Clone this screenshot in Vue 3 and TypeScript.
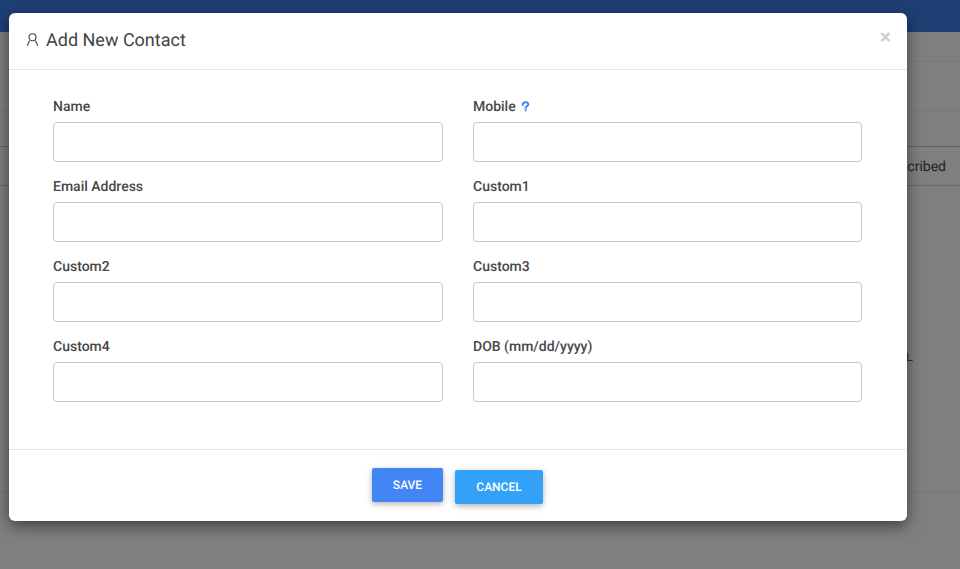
<script setup lang="ts">
const fields: { label: string; help?: boolean }[] = [
  { label: 'Name' },
  { label: 'Mobile', help: true },
  { label: 'Email Address' },
  { label: 'Custom1' },
  { label: 'Custom2' },
  { label: 'Custom3' },
  { label: 'Custom4' },
  { label: 'DOB (mm/dd/yyyy)' },
]
</script>

<template>
  <div class="page">
    <header class="topbar"></header>
    <div class="band band-a"></div>
    <div class="band band-b"></div>
    <div class="band band-c"></div>
    <div class="table-head"><span>Subscribed</span></div>
    <div class="table-body"><span class="stray">L.</span></div>
    <div class="page-foot"></div>

    <div class="overlay">
      <div class="modal">
        <div class="modal-head">
          <svg class="user" viewBox="0 0 13 14" width="13" height="14" fill="none" stroke="#444" stroke-width="1.1">
            <circle cx="6.5" cy="4.2" r="3.5" />
            <path d="M3.6 7.6 1.2 12.8M9.4 7.6l2.4 5.2" />
          </svg>
          <h4 class="title">Add New Contact</h4>
          <span class="close">×</span>
        </div>
        <div class="modal-body">
          <div v-for="f in fields" :key="f.label" class="field">
            <label class="label">
              {{ f.label }}
              <svg v-if="f.help" class="help" viewBox="0 0 10 12" width="9" height="11" fill="none" stroke-linecap="round">
                <path d="M2 4.2C2 2.5 3.3 1.3 5 1.3s3 1.2 3 2.8c0 1.6-2.9 2-2.9 3.2v3.2" stroke="#3f83f8" stroke-width="2.3" />
                <path d="M3.4 4C3.6 3 4.1 2.6 5 2.6s1.6.6 1.6 1.5M5.1 7.6v2.4" stroke="#d5e4ff" stroke-width="0.8" />
              </svg>
            </label>
            <input class="input" type="text" />
          </div>
        </div>
        <div class="modal-foot">
          <button class="btn save">SAVE</button>
          <button class="btn cancel">CANCEL</button>
        </div>
      </div>
    </div>
  </div>
</template>

<style>
html, body { margin: 0; padding: 0; }
</style>

<style scoped>
.page {
  position: relative;
  width: 960px;
  height: 569px;
  overflow: hidden;
  background: #fff;
  font-family: Roboto, "Liberation Sans", sans-serif;
  color: #333;
  text-rendering: geometricPrecision;
}
.topbar { height: 32px; background: #3f7fe8; }
.band { border-bottom: 1px solid #f2f2f2; box-sizing: border-box; }
.band-a { height: 30px; }
.band-b { height: 50px; }
.band-c { height: 35px; border-bottom-color: #c4c4c4; }
.table-head {
  height: 39px;
  box-sizing: border-box;
  border-bottom: 1px solid #d4d4d4;
  display: flex;
  align-items: center;
  justify-content: flex-end;
  padding: 2px 14px 0 0;
  font-size: 14px;
  color: #3d4a55;
}
.table-body {
  height: 307px;
  box-sizing: border-box;
  border-bottom: 1px solid #efefef;
  position: relative;
}
.stray { position: absolute; left: 906px; top: 165px; font-size: 11px; line-height: 13px; letter-spacing: -1.5px; color: #2b4a66; }
.page-foot { height: 76px; }

.overlay {
  position: absolute;
  inset: 0;
  background: rgba(0, 0, 0, 0.5);
  padding: 13px 53px 0 9px;
}
.modal {
  width: 898px;
  height: 508px;
  background: #fff;
  border-radius: 6px;
  box-shadow: 0 5px 15px rgba(0, 0, 0, 0.5);
  display: flex;
  flex-direction: column;
}
.modal-head {
  height: 57px;
  box-sizing: border-box;
  border-bottom: 1px solid #e5e5e5;
  display: flex;
  align-items: center;
  padding: 0 16px 1px 17px;
  position: relative;
}
.user { flex: none; margin-right: 7px; margin-bottom: 1px; }
.title {
  margin: 0;
  font-size: 18px;
  font-weight: 400;
  color: #444;
}
.close {
  margin-left: auto;
  margin-top: -4px;
  font-size: 21px;
  font-weight: 700;
  line-height: 1;
  color: #cfcfcf;
}
.modal-body {
  height: 379px;
  box-sizing: border-box;
  padding: 25px 45px 0 44px;
  display: grid;
  grid-template-columns: 390px 389px;
  column-gap: 30px;
  grid-auto-rows: 80px;
  align-content: start;
}
.field { display: flex; flex-direction: column; }
.label {
  height: 27px;
  font-size: 14px;
  font-weight: 500;
  line-height: 24px;
  color: #484848;
}
.help { margin-left: 2px; vertical-align: -1px; }
.input {
  width: 100%;
  height: 40px;
  box-sizing: border-box;
  border: 1px solid #c8c8c8;
  border-radius: 4px;
  background: #fff;
  padding: 0 10px;
  outline: none;
}
.modal-foot {
  flex: 1;
  border-top: 1px solid #e5e5e5;
  display: flex;
  justify-content: center;
  gap: 12px;
  padding: 18px 2px 0 0;
  align-items: flex-start;
}
.btn {
  border: none;
  border-radius: 2px;
  color: #fff;
  font-family: inherit;
  font-size: 12px;
  font-weight: 500;
  height: 34px;
  padding: 0 0 0 1px;
  box-shadow: 0 2px 5px rgba(0, 0, 0, 0.2), 0 2px 10px rgba(0, 0, 0, 0.12);
  text-rendering: geometricPrecision;
}
.save { width: 71px; background: #4285f4; }
.cancel { width: 88px; background: #33a1f8; margin-top: 2px; }
</style>
